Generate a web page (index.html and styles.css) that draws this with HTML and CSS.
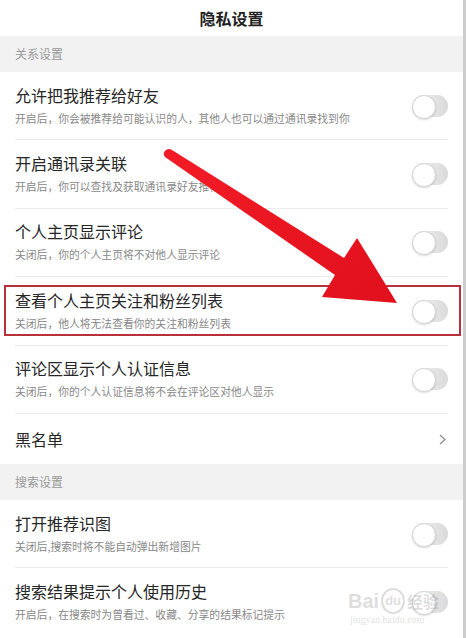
FILE: index.html
```html
<!DOCTYPE html>
<html lang="zh-CN">
<head>
    <meta charset="UTF-8">
    <meta name="viewport" content="width=device-width, initial-scale=1.0">
    <title>隐私设置</title>
    <link rel="stylesheet" href="styles.css">
</head>
<body>
    <div class="page">
        <div class="header">隐私设置</div>

        <div class="section">关系设置</div>

        <div class="row">
            <div class="text">
                <div class="title">允许把我推荐给好友</div>
                <div class="desc">开启后，你会被推荐给可能认识的人，其他人也可以通过通讯录找到你</div>
            </div>
            <span class="switch"></span>
        </div>

        <div class="row">
            <div class="text">
                <div class="title">开启通讯录关联</div>
                <div class="desc">开启后，你可以查找及获取通讯录好友推荐</div>
            </div>
            <span class="switch"></span>
        </div>

        <div class="row">
            <div class="text">
                <div class="title">个人主页显示评论</div>
                <div class="desc">关闭后，你的个人主页将不对他人显示评论</div>
            </div>
            <span class="switch"></span>
        </div>

        <div class="row marked">
            <div class="text">
                <div class="title">查看个人主页关注和粉丝列表</div>
                <div class="desc">关闭后，他人将无法查看你的关注和粉丝列表</div>
            </div>
            <span class="switch"></span>
            <span class="highlight"></span>
        </div>

        <div class="row">
            <div class="text">
                <div class="title">评论区显示个人认证信息</div>
                <div class="desc">关闭后，你的个人认证信息将不会在评论区对他人显示</div>
            </div>
            <span class="switch"></span>
        </div>

        <div class="row link">
            <div class="title">黑名单</div>
            <svg class="chevron" width="7" height="11" viewBox="0 0 7 11">
                <path d="M1 1 L6 5.5 L1 10" fill="none" stroke="#888" stroke-width="1.2"/>
            </svg>
        </div>

        <div class="section">搜索设置</div>

        <div class="row">
            <div class="text">
                <div class="title">打开推荐识图</div>
                <div class="desc">关闭后,搜索时将不能自动弹出新增图片</div>
            </div>
            <span class="switch"></span>
        </div>

        <div class="row last">
            <div class="text">
                <div class="title">搜索结果提示个人使用历史</div>
                <div class="desc">开启后，在搜索时为曾看过、收藏、分享的结果标记提示</div>
            </div>
            <span class="switch"></span>
        </div>

        <!-- annotation arrow drawn over the screenshot -->
        <svg class="arrow" width="463" height="638" viewBox="0 0 463 638">
            <defs>
                <linearGradient id="red" x1="0" y1="0" x2="1" y2="1">
                    <stop offset="0" stop-color="#f21c26"/>
                    <stop offset="1" stop-color="#e0101c"/>
                </linearGradient>
            </defs>
            <path d="M166 150 Q169 148 172 150 L344 258 L357 238 L397 303 L322 297 L335 275 L165 157 Q162 153 166 150 Z" fill="url(#red)"/>
        </svg>

        <div class="watermark">
            <div class="wm-logo"><span>Bai</span><span class="wm-du">du</span><span>经验</span></div>
            <div class="wm-url">jingyan.baidu.com</div>
        </div>
    </div>
</body>
</html>
```

FILE: styles.css
```css
* {
    margin: 0;
    padding: 0;
    box-sizing: border-box;
}

body {
    background-color: #f2f2f2;
    font-family: "Noto Sans CJK SC", "Noto Sans", sans-serif;
    color: #222;
}

.page {
    position: relative;
    width: 466px;
    height: 638px;
    background-color: #fff;
    border-right: 3px solid #cdcdcd;
    overflow: hidden;
}

.header {
    height: 36px;
    line-height: 36px;
    text-align: center;
    font-size: 16px;
    font-weight: 700;
    color: #222;
}

.section {
    height: 36px;
    line-height: 36px;
    padding-left: 15px;
    background-color: #f2f2f2;
    font-size: 12px;
    color: #999;
}

.section + .row {
    height: 68px;
}

.row {
    position: relative;
    display: flex;
    align-items: center;
    justify-content: space-between;
    height: 68.5px;
    margin: 0 15px;
    border-bottom: 1px solid #ececec;
}

.row.link {
    height: 50px;
    border-bottom: none;
}

.row.last {
    border-bottom: none;
}

.text {
    padding-top: 2px;
}

.title {
    font-size: 16px;
    line-height: 22px;
    color: #262626;
}

.desc {
    font-size: 10.8px;
    line-height: 24px;
    color: #888;
    white-space: nowrap;
}

.switch {
    position: relative;
    flex: none;
    width: 36px;
    height: 22px;
    border-radius: 11px;
    background: linear-gradient(to right, #f4f4f4, #dadada);
}

.switch::before {
    content: "";
    position: absolute;
    left: 0;
    top: 0;
    width: 22px;
    height: 22px;
    border-radius: 50%;
    background-color: #fff;
    border: 1px solid #d4d4d4;
    box-shadow: 0 1px 2px rgba(0, 0, 0, 0.15);
}

.chevron {
    margin-right: 2px;
}

.highlight {
    position: absolute;
    left: -11px;
    right: -13px;
    top: 8px;
    bottom: 9px;
    border: 2px solid #b8303a;
}

.arrow {
    position: absolute;
    left: 0;
    top: 0;
    pointer-events: none;
}

.watermark {
    position: absolute;
    left: 348px;
    top: 588px;
    color: rgba(120, 120, 120, 0.25);
    pointer-events: none;
}

.wm-logo {
    display: flex;
    align-items: center;
    gap: 2px;
    font-family: "Liberation Sans", sans-serif;
    font-size: 20px;
    font-weight: 700;
    line-height: 22px;
}

.wm-du {
    font-size: 13px;
    border: 2px solid rgba(120, 120, 120, 0.25);
    border-radius: 50%;
    padding: 0 2px;
}

.wm-logo span:last-child {
    font-family: "Noto Sans CJK SC", sans-serif;
    font-size: 16px;
}

.wm-url {
    font-family: "Liberation Serif", serif;
    font-size: 10px;
    line-height: 12px;
    padding-left: 2px;
}
```
